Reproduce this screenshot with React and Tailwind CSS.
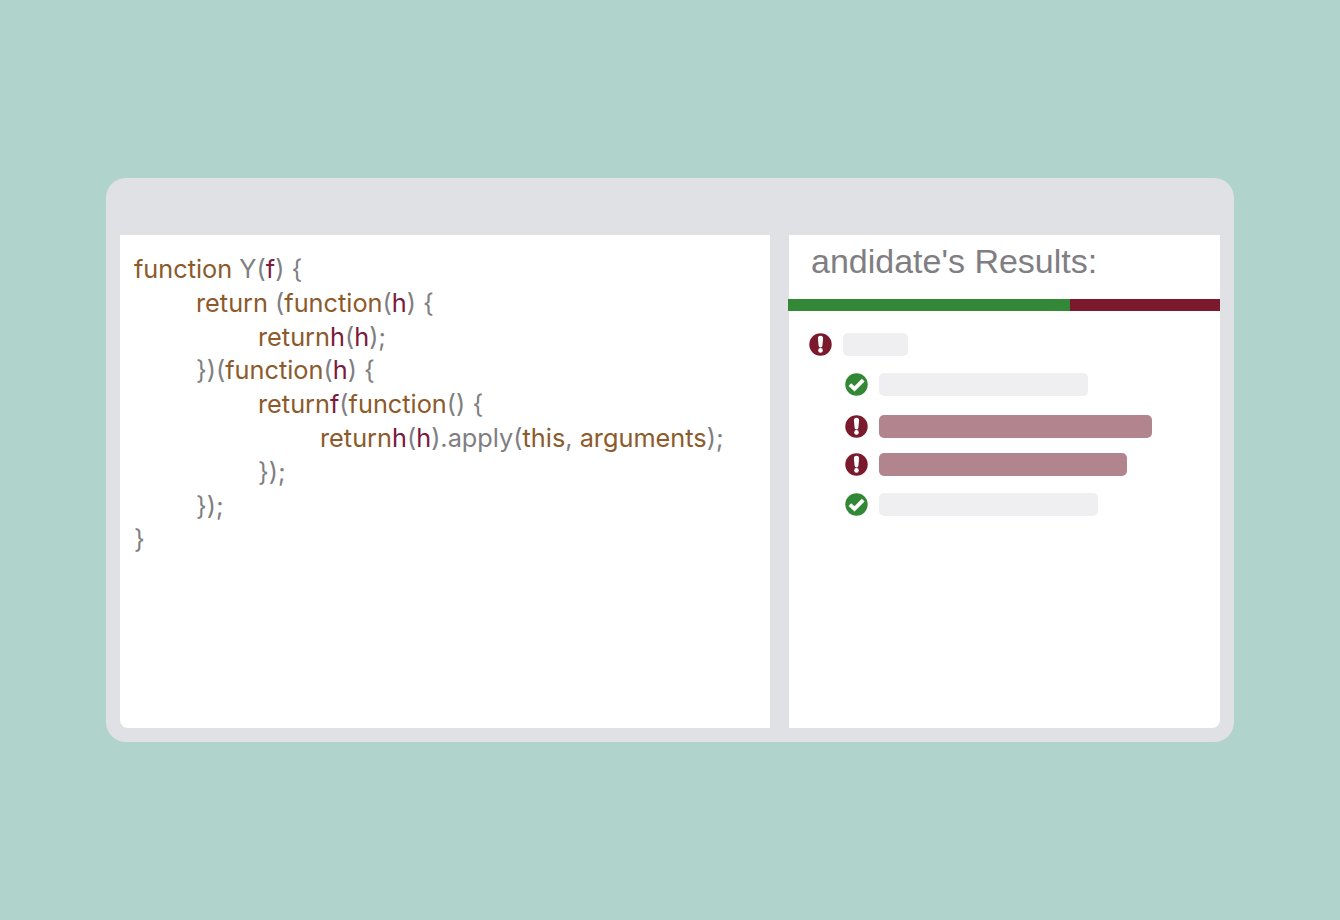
const K = ({ children }) => <span className="text-[#8c5a2b]">{children}</span>;
const V = ({ children }) => <span className="text-[#7b1a3c]">{children}</span>;

function Line({ indent = "", children }) {
  return <div className={`h-[33.8px] whitespace-pre ${indent}`}>{children}</div>;
}

function AlertIcon() {
  return (
    <svg viewBox="0 0 23 23" className="w-[23px] h-[23px] shrink-0">
      <circle cx="11.5" cy="11.5" r="11.2" fill="#7a1a2c" />
      <path d="M8.9 5.4a2.6 2.6 0 0 1 5.2 0l-.7 7.2a1.9 1.9 0 0 1-3.8 0z" fill="#fff" />
      <circle cx="11.5" cy="17.4" r="2.3" fill="#fff" />
    </svg>
  );
}

function CheckIcon() {
  return (
    <svg viewBox="0 0 23 23" className="w-[23px] h-[23px] shrink-0">
      <circle cx="11.5" cy="11.5" r="11.2" fill="#328837" />
      <path d="M4.9 11.6l4.6 4.3 8.7-8.7" fill="none" stroke="#fff" strokeWidth="3.8" />
    </svg>
  );
}

function Row({ ok, bar, offset, mt }) {
  return (
    <div className={`flex items-center gap-[10.5px] ${offset} ${mt}`}>
      {ok ? <CheckIcon /> : <AlertIcon />}
      <div className={`h-[23px] rounded-[5px] ${bar}`} />
    </div>
  );
}

export default function App() {
  return (
    <div className="min-h-[920px] bg-[#b0d3cc] flex items-center justify-center">
      <div className="w-[1128px] h-[564px] bg-[#dfe1e5] rounded-[20px] flex flex-col pt-[57px] px-[14px] pb-[14px]">
        <div className="flex-1 flex gap-[19px]">
          {/* code panel */}
          <div className="w-[650px] bg-white rounded-bl-lg pt-[17px] pl-[14px] font-['Inter',sans-serif] text-[25.3px] leading-[33.8px] text-[#807e83]">
            <Line><K>function</K> Y(<V>f</V>) {"{"}</Line>
            <Line indent="pl-[62px]"><K>return</K> (<K>function</K>(<V>h</V>) {"{"}</Line>
            <Line indent="pl-[124px]"><K>return</K><V>h</V>(<V>h</V>);</Line>
            <Line indent="pl-[62px]">{"})"}(<K>function</K>(<V>h</V>) {"{"}</Line>
            <Line indent="pl-[124px]"><K>return</K><V>f</V>(<K>function</K>() {"{"}</Line>
            <Line indent="pl-[186px]"><K>return</K><V>h</V>(<V>h</V>).apply(<K>this</K>, <K>arguments</K>);</Line>
            <Line indent="pl-[124px]">{"});"}</Line>
            <Line indent="pl-[62px]">{"});"}</Line>
            <Line>{"}"}</Line>
          </div>

          {/* results panel */}
          <div className="flex-1 bg-white rounded-br-lg">
            <div className="h-[64px] pl-[22px] pt-[7px] font-['Liberation_Sans',sans-serif] text-[34px] leading-[38px] text-[#807e83]">
              andidate's Results:
            </div>
            <div className="flex h-3 -ml-px">
              <div className="w-[282px] bg-[#328837]" />
              <div className="flex-1 bg-[#7a1a2c]" />
            </div>
            <div className="pt-[22px]">
              <Row offset="ml-[20px]" bar="w-[65px] bg-[#efeef1]" />
              <Row ok offset="ml-[56px]" mt="mt-[17px]" bar="w-[209px] bg-[#efeef1]" />
              <Row offset="ml-[56px]" mt="mt-[19px]" bar="w-[273px] bg-[#b2858e]" />
              <Row offset="ml-[56px]" mt="mt-[15px]" bar="w-[248px] bg-[#b2858e]" />
              <Row ok offset="ml-[56px]" mt="mt-[17px]" bar="w-[219px] bg-[#efeef1]" />
            </div>
          </div>
        </div>
      </div>
    </div>
  );
}
